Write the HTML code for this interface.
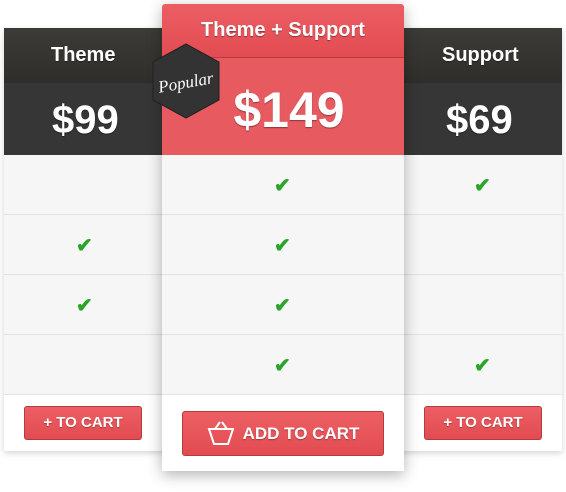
<!DOCTYPE html><html><head><style>
body{margin:0;width:566px;height:492px;background:#fff;position:relative;font-family:"Liberation Sans",sans-serif;overflow:hidden}
.col{position:absolute;background:#fff;box-shadow:0 2px 6px rgba(0,0,0,.18)}
.hd{position:absolute;left:0;right:0;color:#fff;font-weight:bold;text-align:center;text-shadow:0 1px 1px rgba(0,0,0,.4)}
.row{position:absolute;left:0;right:0;height:59px;background:#f6f6f6;border-bottom:1px solid #e2e2e2}
.ck{position:absolute;color:#2aa52a;font-size:20px;font-weight:bold}
.btn{position:absolute;background:linear-gradient(#ec5f64,#e24c50);border:1px solid #b83a3e;border-radius:3px;color:#fff;font-weight:bold;text-align:center;text-shadow:0 1px 1px rgba(0,0,0,.3)}
</style></head><body>
<div class="col" style="left:4px;top:28px;width:558px;height:423px">
 <div class="hd" style="top:0;height:55px;line-height:55px;font-size:20px;background:linear-gradient(#3d3b37,#2f2e2b)"><span style="position:absolute;left:47px">Theme</span><span style="position:absolute;left:438px">Support</span></div>
 <div class="hd" style="top:55px;height:72px;line-height:74px;font-size:40px;background:#363636"><span style="position:absolute;left:48px">$99</span><span style="position:absolute;left:442px">$69</span></div>
 <div class="row" style="top:127px"></div><div class="row" style="top:187px"></div><div class="row" style="top:247px"></div><div class="row" style="top:307px"></div>
</div>
<div class="ck" style="left:474px;top:173px">✔</div>
<div class="ck" style="left:76px;top:233px">✔</div>
<div class="ck" style="left:76px;top:293px">✔</div>
<div class="ck" style="left:474px;top:353px">✔</div>
<div class="btn" style="left:24px;top:406px;width:116px;height:32px;line-height:32px;font-size:15px">+ TO CART</div>
<div class="btn" style="left:424px;top:406px;width:116px;height:32px;line-height:32px;font-size:15px">+ TO CART</div>
<div class="col" style="left:162px;top:4px;width:242px;height:467px;box-shadow:0 4px 14px rgba(0,0,0,.3)">
 <div class="hd" style="top:0;height:53px;line-height:53px;font-size:20px;background:linear-gradient(#ec5e64,#e24c52);border-bottom:1px solid #b8393e;border-radius:3px 3px 0 0">Theme + Support</div>
 <div class="hd" style="top:54px;height:97px;line-height:104px;font-size:50px;background:#e65a60;padding-left:12px;box-sizing:border-box">$149</div>
 <div class="row" style="top:151px"></div><div class="row" style="top:211px"></div><div class="row" style="top:271px"></div><div class="row" style="top:331px"></div>
</div>
<div class="ck" style="left:274px;top:173px">✔</div>
<div class="ck" style="left:274px;top:233px">✔</div>
<div class="ck" style="left:274px;top:293px">✔</div>
<div class="ck" style="left:274px;top:353px">✔</div>
<svg style="position:absolute;left:150px;top:42px" width="72" height="78"><polygon points="36,2 69,20 69,58 36,76 3,58 3,20" fill="#333" stroke="#222"/><text x="36" y="46" fill="#fff" font-size="17" font-style="italic" font-family="Liberation Serif,serif" text-anchor="middle" transform="rotate(-10 36 42)">Popular</text></svg>
<div class="btn" style="left:182px;top:411px;width:200px;height:43px;line-height:43px;font-size:17px"><svg width="28" height="26" style="vertical-align:middle;margin-right:8px;margin-top:-4px" fill="none" stroke="#fff" stroke-width="2"><path d="M2 9h24l-5 15H7z M8 9l5-7 M20 9l-5-7"/></svg>ADD TO CART</div>
</body></html>
